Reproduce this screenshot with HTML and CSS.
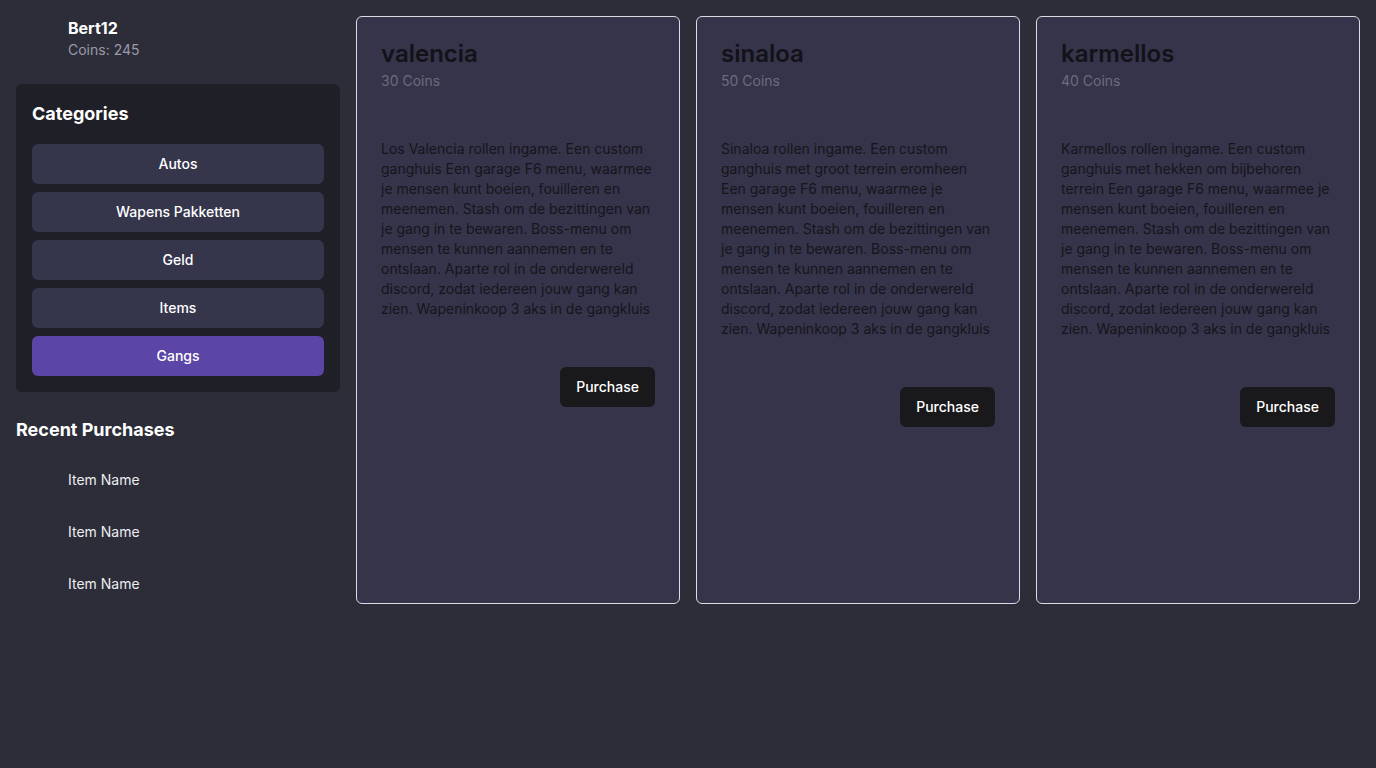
FILE: index.html
```html
<!DOCTYPE html>
<html lang="nl">
<head>
<meta charset="utf-8">
<title>Shop</title>
<link rel="stylesheet" href="styles.css">
</head>
<body>
<div class="app">
  <aside class="sidebar">
    <div class="user">
      <div class="avatar"></div>
      <div class="user-info">
        <div class="user-name">Bert12</div>
        <div class="user-coins">Coins: 245</div>
      </div>
    </div>
    <div class="categories">
      <h2 class="section-title">Categories</h2>
      <div class="cat-list">
        <button class="cat-btn">Autos</button>
        <button class="cat-btn">Wapens Pakketten</button>
        <button class="cat-btn">Geld</button>
        <button class="cat-btn">Items</button>
        <button class="cat-btn active">Gangs</button>
      </div>
    </div>
    <h2 class="section-title recent-title">Recent Purchases</h2>
    <div class="recent-list">
      <div class="recent-item"><div class="thumb"></div><span>Item Name</span></div>
      <div class="recent-item"><div class="thumb"></div><span>Item Name</span></div>
      <div class="recent-item"><div class="thumb"></div><span>Item Name</span></div>
    </div>
  </aside>
  <main class="products">
    <div class="card">
      <h3 class="card-title">valencia</h3>
      <div class="card-price">30 Coins</div>
      <p class="card-desc">Los Valencia rollen ingame. Een custom ganghuis Een garage F6 menu, waarmee je mensen kunt boeien, fouilleren en meenemen. Stash om de bezittingen van je gang in te bewaren. Boss-menu om mensen te kunnen aannemen en te ontslaan. Aparte rol in de onderwereld discord, zodat iedereen jouw gang kan zien. Wapeninkoop 3 aks in de gangkluis</p>
      <div class="card-actions"><button class="buy-btn">Purchase</button></div>
    </div>
    <div class="card">
      <h3 class="card-title">sinaloa</h3>
      <div class="card-price">50 Coins</div>
      <p class="card-desc">Sinaloa rollen ingame. Een custom ganghuis met groot terrein eromheen Een garage F6 menu, waarmee je mensen kunt boeien, fouilleren en meenemen. Stash om de bezittingen van je gang in te bewaren. Boss-menu om mensen te kunnen aannemen en te ontslaan. Aparte rol in de onderwereld discord, zodat iedereen jouw gang kan zien. Wapeninkoop 3 aks in de gangkluis</p>
      <div class="card-actions"><button class="buy-btn">Purchase</button></div>
    </div>
    <div class="card">
      <h3 class="card-title">karmellos</h3>
      <div class="card-price">40 Coins</div>
      <p class="card-desc">Karmellos rollen ingame. Een custom ganghuis met hekken om bijbehoren terrein Een garage F6 menu, waarmee je mensen kunt boeien, fouilleren en meenemen. Stash om de bezittingen van je gang in te bewaren. Boss-menu om mensen te kunnen aannemen en te ontslaan. Aparte rol in de onderwereld discord, zodat iedereen jouw gang kan zien. Wapeninkoop 3 aks in de gangkluis</p>
      <div class="card-actions"><button class="buy-btn">Purchase</button></div>
    </div>
  </main>
</div>
</body>
</html>
```
FILE: styles.css
```css
* { box-sizing: border-box; }
html, body {
  margin: 0;
  padding: 0;
  background: #2c2d38;
  font-family: Inter, "Noto Sans", sans-serif;
  color: #fff;
  height: 100%;
}
.app {
  display: flex;
  gap: 16px;
  padding: 16px;
  align-items: flex-start;
}
.sidebar {
  width: 324px;
  flex: none;
  display: flex;
  flex-direction: column;
}
.user {
  display: flex;
  align-items: center;
  gap: 12px;
}
.avatar, .thumb {
  width: 40px;
  height: 40px;
  flex: none;
}
.user-name {
  font-size: 16px;
  font-weight: 700;
  line-height: 24px;
}
.user-coins {
  font-size: 14px;
  line-height: 20px;
  color: #9a9aa8;
}
.categories {
  margin-top: 24px;
  background: #1f1f27;
  border-radius: 6px;
  padding: 16px;
}
.section-title {
  margin: 0;
  font-size: 18px;
  line-height: 28px;
  font-weight: 700;
  color: #fff;
}
.cat-list {
  margin-top: 16px;
  display: flex;
  flex-direction: column;
  gap: 8px;
}
.cat-btn {
  height: 40px;
  padding: 10px 16px;
  line-height: 20px;
  border: none;
  border-radius: 6px;
  background: #35354b;
  color: #fff;
  font-family: inherit;
  font-size: 14px;
  font-weight: 500;
}
.cat-btn.active {
  background: #5b45a6;
}
.recent-title {
  margin-top: 24px;
}
.recent-list {
  margin-top: 16px;
  display: flex;
  flex-direction: column;
  gap: 12px;
}
.recent-item {
  display: flex;
  align-items: center;
  gap: 12px;
  font-size: 14px;
  line-height: 20px;
  color: #ececf2;
}
.products {
  flex: 1;
  display: grid;
  grid-template-columns: repeat(3, 1fr);
  gap: 16px;
}
.card {
  height: 588px;
  background: #35344a;
  border: 1px solid #dcdce4;
  border-radius: 6px;
  padding: 25px 24px 24px;
}
.card-title {
  margin: 0;
  font-size: 24px;
  line-height: 24px;
  font-weight: 600;
  color: #121218;
}
.card-price {
  margin-top: 5px;
  font-size: 14px;
  line-height: 20px;
  color: #6c6c7e;
}
.card-desc {
  margin: 48px 0 0;
  font-size: 14px;
  line-height: 20px;
  color: #15151c;
}
.card-actions {
  display: flex;
  justify-content: flex-end;
  margin-top: 48px;
}
.buy-btn {
  height: 40px;
  padding: 10px 16px;
  line-height: 20px;
  border: none;
  border-radius: 6px;
  background: #19191b;
  color: #fff;
  font-family: inherit;
  font-size: 14px;
  font-weight: 500;
}
```
